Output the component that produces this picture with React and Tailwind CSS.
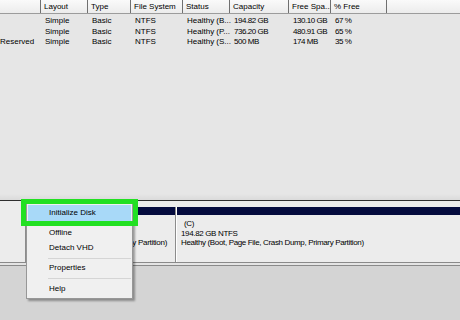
const cols = [
  { w: "w-[41px]", label: "" },
  { w: "w-[47px]", label: "Layout" },
  { w: "w-[43px]", label: "Type" },
  { w: "w-[52px]", label: "File System" },
  { w: "w-[47px]", label: "Status" },
  { w: "w-[59px]", label: "Capacity" },
  { w: "w-[42px]", label: "Free Spa..." },
  { w: "w-[56px]", label: "% Free" },
];

const rows = [
  ["", "Simple", "Basic", "NTFS", "Healthy (B...", "194.82 GB", "130.10 GB", "67 %"],
  ["", "Simple", "Basic", "NTFS", "Healthy (P...", "736.20 GB", "480.91 GB", "65 %"],
  ["Reserved", "Simple", "Basic", "NTFS", "Healthy (S...", "500 MB", "174 MB", "35 %"],
];

function MenuSep() {
  return (
    <div className="h-[6px] pt-[3px]">
      <div className="ml-[21px] mr-[1px] h-px bg-[#d5d5d5]" />
    </div>
  );
}

function MenuItem({ children }) {
  return <div className="h-[15px] flex items-center pl-[22px]">{children}</div>;
}

export default function App() {
  return (
    <div className="relative w-[460px] h-[320px] overflow-hidden flex flex-col bg-[#e6e6e6] text-black text-[8px] leading-none font-['Liberation_Sans',Arial,sans-serif]">
      {/* volume list */}
      <div className="h-[200px] flex flex-col bg-[#e6e6e6]">
        <div className="h-[14px] flex bg-gradient-to-b from-[#fafafa] to-[#ececec] border-b border-[#9c9c9c]">
          {cols.map((c, i) => (
            <div
              key={i}
              className={`${c.w} shrink-0 border-r border-[#707070] flex items-center pl-[3px] whitespace-nowrap overflow-hidden`}
            >
              {c.label}
            </div>
          ))}
          <div className="flex-1" />
        </div>
        <div className="pt-[2px]">
          {rows.map((r, ri) => (
            <div key={ri} className="h-[10.5px] flex">
              {r.map((cell, ci) => (
                <div
                  key={ci}
                  className={`${cols[ci].w} shrink-0 flex items-center whitespace-nowrap ${ci === 0 ? "pl-0" : "pl-[4px]"} ${ci >= 5 ? "tracking-[-0.45px]" : ""}`}
                >
                  {cell}
                </div>
              ))}
            </div>
          ))}
        </div>
        <div className="flex-1" />
        <div className="h-[6px] bg-gradient-to-b from-[#e6e6e6] to-[#dadada]" />
      </div>

      {/* disk map */}
      <div className="h-[66px] flex flex-col border-t border-[#2e2e2e] bg-[#ececec]">
        <div className="flex-1 flex pt-[1px]">
          <div className="w-[26px] shrink-0 border-r border-[#8c8c8c]" />
          <div className="flex-1 flex pt-[5px]">
            <div className="w-[150px] shrink-0 flex flex-col border-r border-[#8c8c8c]">
              <div className="h-[8px] bg-[#050b3e]" />
              <div className="flex-1 flex flex-col pt-[23px] pr-[8px] text-right leading-[9.5px] whitespace-nowrap tracking-[-0.3px]">
                <div>Healthy (System, Active, Primary Partition)</div>
              </div>
            </div>
            <div className="w-px bg-white" />
            <div className="flex-1 flex flex-col">
              <div className="h-[8px] bg-[#050b3e]" />
              <div className="flex-1 flex flex-col pt-[4px] pl-[4px] leading-[9.5px] whitespace-nowrap tracking-[-0.35px]">
                <div className="pl-[3px]">(C)</div>
                <div>194.82 GB NTFS</div>
                <div>Healthy (Boot, Page File, Crash Dump, Primary Partition)</div>
              </div>
            </div>
          </div>
        </div>
        <div className="h-[4px] border-t border-b border-[#8a8a8a] bg-[#e4e4e4]" />
      </div>

      <div className="flex-1 bg-[#d4d4d4]" />

      {/* context menu */}
      <div className="absolute left-[26px] top-[203px] w-[107px] bg-[#f0f0f0] border border-[#979797] shadow-[2px_2px_2px_rgba(0,0,0,0.35)] pt-px pb-[2px]">
        <div className="mx-px h-[16px] flex items-center pl-[21px] bg-[#a8d9f8]">Initialize Disk</div>
        <div className="h-[4px]" />
        <MenuItem>Offline</MenuItem>
        <MenuItem>Detach VHD</MenuItem>
        <MenuSep />
        <div className="h-[14px] flex items-center pl-[22px]">Properties</div>
        <MenuSep />
        <MenuItem>Help</MenuItem>
      </div>
      <div className="absolute left-[21px] top-[199px] w-[117px] h-[27px] border-[5px] border-[#22e022]" />
    </div>
  );
}
